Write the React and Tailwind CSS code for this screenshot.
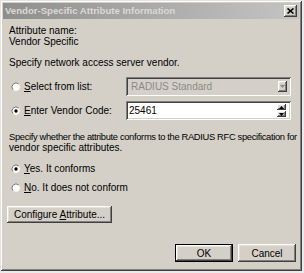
import React from "react";

// Classic (Win2k3-style) 3D edges
const RAISED =
  "shadow-[inset_-1px_-1px_0_#404040,inset_1px_1px_0_#ffffff,inset_-2px_-2px_0_#808080,inset_2px_2px_0_#e4e1da]";
const SUNKEN =
  "shadow-[inset_1px_1px_0_#808080,inset_-1px_-1px_0_#ffffff,inset_2px_2px_0_#404040,inset_-2px_-2px_0_#d4d0c8]";

function Radio({ checked }) {
  return (
    <svg width="10" height="10" viewBox="0 0 10 10" className="shrink-0">
      <circle cx="5" cy="5" r="4" fill="#fff" />
      <path d="M2.17 7.83 A4 4 0 0 1 7.83 2.17" fill="none" stroke="#7a7a7a" strokeWidth="1" />
      <path d="M7.83 2.17 A4 4 0 0 1 2.17 7.83" fill="none" stroke="#e6e4de" strokeWidth="1" />
      {checked ? <circle cx="5" cy="5" r="1.7" fill="#000" /> : null}
    </svg>
  );
}

function Arrow({ up, color = "#000" }) {
  return (
    <svg width="5" height="3" viewBox="0 0 5 3">
      <path d={up ? "M2.5 0 L5 3 L0 3 Z" : "M0 0 L5 0 L2.5 3 Z"} fill={color} />
    </svg>
  );
}

function RadioRow({ checked, children }) {
  return (
    <div className="flex items-center gap-[3px] pl-[2px] leading-[12px]">
      <Radio checked={checked} />
      <span>{children}</span>
    </div>
  );
}

function Button({ children, isDefault, className = "" }) {
  return (
    <div className={`${isDefault ? "border border-black" : ""} ${className}`}>
      <div className={`flex h-full w-full items-center justify-center bg-[#d4d0c8] ${RAISED}`}>
        <span>{children}</span>
      </div>
    </div>
  );
}

export default function App() {
  return (
    <div className="h-[273px] w-[304px] overflow-hidden bg-[#ebebeb] font-['Liberation_Sans',Arial,sans-serif] text-[10px] text-black">
      <div className="h-[271px] w-[302px] overflow-hidden bg-[#d4d0c8] p-[3px] pb-0 shadow-[inset_1px_1px_0_#e6e3dc,inset_-1px_-1px_0_#404040,inset_2px_2px_0_#ffffff,inset_-2px_-2px_0_#808080]">
        {/* title bar (inactive) */}
        <div className="flex h-[16px] items-center justify-between bg-gradient-to-r from-[#8e8e8e] via-[#aaaaaa] to-[#c4c4c4] pl-[2px] pr-[2px]">
          <span className="text-[9.6px] font-bold leading-none text-[#dcd9d2]">Vendor-Specific Attribute Information</span>
          <div className={`flex h-[12px] w-[13px] items-center justify-center bg-[#d4d0c8] ${RAISED}`}>
            <svg width="7" height="6" viewBox="0 0 7 6">
              <path d="M0.5 0.5 L6.5 5.5 M6.5 0.5 L0.5 5.5" stroke="#000" strokeWidth="1.6" />
            </svg>
          </div>
        </div>

        <div className="flex flex-col pl-[6px]">
          <div className="mt-[6px] leading-[11px]">
            <div>Attribute name:</div>
            <div>Vendor Specific</div>
          </div>
          <div className="mt-[10px] leading-[11px]">Specify network access server vendor.</div>

          <div className="mt-[9px] flex h-[19px] items-center">
            <div className="w-[117px]">
              <RadioRow>
                <u>S</u>elect from list:
              </RadioRow>
            </div>
            <div className={`flex h-[19px] w-[165px] items-center justify-between bg-[#d4d0c8] pl-[5px] pr-[4px] ${SUNKEN}`}>
              <span className="text-[#8a8a8a]">RADIUS Standard</span>
              <div className={`flex h-[11px] w-[9px] items-center justify-center bg-[#d4d0c8] ${RAISED}`}>
                <Arrow color="#8a8a8a" />
              </div>
            </div>
          </div>

          <div className="mt-[5px] flex h-[19px] items-center">
            <div className="w-[117px]">
              <RadioRow checked>
                <u>E</u>nter Vendor Code:
              </RadioRow>
            </div>
            <div className={`flex h-[19px] w-[165px] items-center justify-between bg-white pl-[3px] pr-[5px] ${SUNKEN}`}>
              <span>25461</span>
              <div className="flex flex-col gap-[1px]">
                <div className={`flex h-[6px] w-[9px] items-center justify-center bg-[#d4d0c8] ${RAISED}`}>
                  <Arrow up />
                </div>
                <div className={`flex h-[6px] w-[9px] items-center justify-center bg-[#d4d0c8] ${RAISED}`}>
                  <Arrow />
                </div>
              </div>
            </div>
          </div>

          <div className="mt-[11px] leading-[11px]">
            <div className="whitespace-nowrap text-[9.4px] tracking-[-0.35px]">
              Specify whether the attribute conforms to the RADIUS RFC specification for
            </div>
            <div>vendor specific attributes.</div>
          </div>

          <div className="mt-[10px]">
            <RadioRow checked>
              <u>Y</u>es. It conforms
            </RadioRow>
          </div>
          <div className="mt-[7px]">
            <RadioRow>
              <u>N</u>o. It does not conform
            </RadioRow>
          </div>

          <div className="mt-[12px]">
            <Button className="ml-[-2px] h-[17px] w-[105px]">
              Configure <u>A</u>ttribute...
            </Button>
          </div>

          <div className="mt-[21px] flex justify-end gap-[5px] pr-[3px]">
            <Button isDefault className="h-[18px] w-[58px]">OK</Button>
            <Button className="h-[18px] w-[58px]">Cancel</Button>
          </div>
        </div>
      </div>
    </div>
  );
}
